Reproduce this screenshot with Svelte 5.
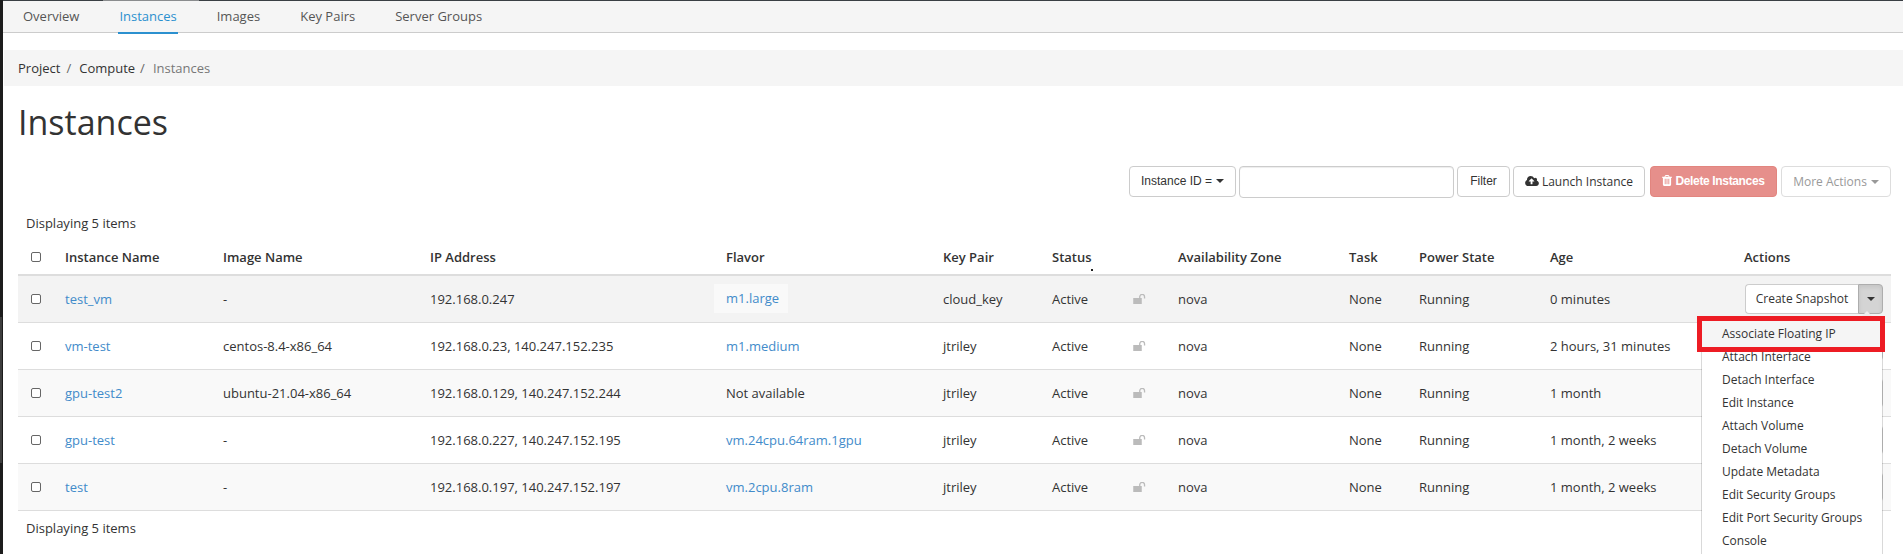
<script>
  const tabs = ['Overview', 'Instances', 'Images', 'Key Pairs', 'Server Groups'];
  const heads = ['Instance Name', 'Image Name', 'IP Address', 'Flavor', 'Key Pair', 'Status', '', 'Availability Zone', 'Task', 'Power State', 'Age', 'Actions'];
  const rows = [
    { name: 'test_vm', image: '-', ip: '192.168.0.247', flavor: 'm1.large', flavorLink: true, key: 'cloud_key', age: '0 minutes' },
    { name: 'vm-test', image: 'centos-8.4-x86_64', ip: '192.168.0.23, 140.247.152.235', flavor: 'm1.medium', flavorLink: true, key: 'jtriley', age: '2 hours, 31 minutes' },
    { name: 'gpu-test2', image: 'ubuntu-21.04-x86_64', ip: '192.168.0.129, 140.247.152.244', flavor: 'Not available', flavorLink: false, key: 'jtriley', age: '1 month' },
    { name: 'gpu-test', image: '-', ip: '192.168.0.227, 140.247.152.195', flavor: 'vm.24cpu.64ram.1gpu', flavorLink: true, key: 'jtriley', age: '1 month, 2 weeks' },
    { name: 'test', image: '-', ip: '192.168.0.197, 140.247.152.197', flavor: 'vm.2cpu.8ram', flavorLink: true, key: 'jtriley', age: '1 month, 2 weeks' }
  ];
  const menu = ['Associate Floating IP', 'Attach Interface', 'Detach Interface', 'Edit Instance', 'Attach Volume', 'Detach Volume', 'Update Metadata', 'Edit Security Groups', 'Edit Port Security Groups', 'Console'];
</script>

<div class="screen">
  <div class="edge"><div class="thumb"></div></div>
  <div class="main">
    <div class="topline"></div>
    <nav class="tabs">
      {#each tabs as t, i}
        <span class="tab" class:active={i === 1}>{t}</span>
      {/each}
    </nav>
    <div class="crumbs">
      <span class="firstcrumb">Project</span><span class="sep">/</span><span>Compute</span><span class="sep">/</span><span class="cur">Instances</span>
    </div>
    <div class="content">
      <h1>Instances</h1>
      <div class="toolbar">
        <button class="btn arial idsel">Instance ID =<i class="caret"></i></button>
        <div class="input"></div>
        <button class="btn arial filter">Filter</button>
        <button class="btn launch">
          <svg class="ico-cloud" viewBox="0 128 1920 1536"><path fill="#333" d="M1280 864q0-14-9-23l-352-352q-9-9-23-9t-23 9l-351 351q-10 12-10 24 0 14 9 23t23 9h224v352q0 13 9.500 22.500t22.500 9.500h192q13 0 22.500-9.500t9.500-22.500v-352h224q13 0 22.500-9.500t9.500-22.500zm640 288q0 159-112.500 271.500t-271.500 112.500h-1088q-185 0-316.500-131.500t-131.500-316.500q0-130 70-240t188-165q-2-30-2-43 0-212 150-362t362-150q156 0 285.500 87t188.500 231q71-62 166-62 106 0 181 75t75 181q0 76-41 138 130 31 213.500 135.500t83.500 238.500z"/></svg>
          Launch Instance
        </button>
        <button class="btn arial del">
          <svg class="ico-trash" viewBox="0 128 1408 1536"><path fill="#fff" d="M512 1376v-704q0-14-9-23t-23-9h-64q-14 0-23 9t-9 23v704q0 14 9 23t23 9h64q14 0 23-9t9-23zm256 0v-704q0-14-9-23t-23-9h-64q-14 0-23 9t-9 23v704q0 14 9 23t23 9h64q14 0 23-9t9-23zm256 0v-704q0-14-9-23t-23-9h-64q-14 0-23 9t-9 23v704q0 14 9 23t23 9h64q14 0 23-9t9-23zm-544-992h448l-48-117q-7-9-17-11h-317q-10 2-17 11zm928 32v64q0 14-9 23t-23 9h-96v948q0 83-47 143.500t-113 60.500h-832q-66 0-113-58.500t-47-141.500v-952h-96q-14 0-23-9t-9-23v-64q0-14 9-23t23-9h309l70-167q15-37 54-63t79-26h320q40 0 79 26t54 63l70 167h309q14 0 23 9t9 23z"/></svg>
          Delete Instances
        </button>
        <button class="btn more">More Actions<i class="caret grey"></i></button>
      </div>
      <div class="count">Displaying 5 items</div>
      <table>
        <colgroup>
          <col class="c0" /><col class="c1" /><col class="c2" /><col class="c3" /><col class="c4" /><col class="c5" /><col class="c6" /><col class="c7" /><col class="c8" /><col class="c9" /><col class="c10" /><col class="c11" /><col class="c12" />
        </colgroup>
        <thead>
          <tr>
            <th class="chk"><span class="box"></span></th>
            {#each heads as h, i}
              <th class:statushead={i === 5}>{h}{#if i === 5}<i class="dot"></i>{/if}</th>
            {/each}
          </tr>
        </thead>
        <tbody>
          {#each rows as r, i}
            <tr class:hover={i === 0} class:odd={i === 2 || i === 4}>
              <td class="chk"><span class="box"></span></td>
              <td><span class="link">{r.name}</span></td>
              <td>{r.image}</td>
              <td>{r.ip}</td>
              <td>
                {#if r.flavorLink}<span class="link" class:hl={i === 0}>{r.flavor}</span>{:else}{r.flavor}{/if}
              </td>
              <td>{r.key}</td>
              <td>Active</td>
              <td>
                <svg class="ico-lock" viewBox="0 0 12.500 10">
                  <rect x="0" y="4" width="8.500" height="6" fill="#bbb" />
                  <path d="M6.500 4.500V2.800a2.300 2.300 0 0 1 4.800 0V4.500" fill="none" stroke="#bbb" stroke-width="1.300" />
                </svg>
              </td>
              <td>nova</td>
              <td>None</td>
              <td>Running</td>
              <td>{r.age}</td>
              <td class="actions">
                <div class="split">
                  <div class="split-main">{i === 0 ? 'Create Snapshot' : ''}</div>
                  <div class="split-caret" class:open={i === 0}><i class="caret"></i></div>
                  {#if i === 0}
                    <div class="menu">
                      <div class="annot"></div>
                      {#each menu as m, j}
                        <div class="item" class:first={j === 0}>{m}</div>
                      {/each}
                    </div>
                  {/if}
                </div>
              </td>
            </tr>
          {/each}
        </tbody>
      </table>
      <div class="count foot">Displaying 5 items</div>
    </div>
  </div>
</div>

<style>
  :global(body) { margin: 0; background: #fff; }
  .screen { display: flex; height: 554px; overflow: hidden; background: #fff; font: 13px/18px "Open Sans", sans-serif; color: #333; }
  .edge { position: relative; width: 3px; flex: none; background: #1c1c1c; }
  .thumb { position: absolute; left: 0; top: 317px; width: 2px; height: 146px; background: #3d3d3d; }
  .main { flex: 1; min-width: 0; }
  .topline { height: 1px; background: linear-gradient(90deg, #3a3f44 100px, #8a8c8e 100px, #8a8c8e 196px, #3a3f44 196px); }
  .tabs { display: flex; gap: 40px; height: 31px; padding-left: 20px; background: #f5f5f5; border-bottom: 1px solid #ccc; }
  .tab { font-size: 13px; line-height: 31px; color: #555; height: 31px; }
  .tab.active { color: #2b90cf; position: relative; }
  .tab.active::after { content: ""; position: absolute; left: -1px; right: -1px; bottom: -2px; height: 2px; background: #2b90cf; }
  .crumbs { display: flex; align-items: center; margin: 17px 0 0 1px; height: 36px; padding-left: 14px; background: #f5f5f5; font-size: 13px; }
  .firstcrumb { margin-right: 1px; }
  .sep { margin: 0 8px 0 5px; color: #666; }
  .cur { color: #777; }
  .content { padding: 0 12px 0 15px; }
  h1 { margin: 17px 0 0; font-size: 34px; line-height: 38px; font-weight: 500; color: #333; }
  .toolbar { display: flex; justify-content: flex-end; align-items: flex-start; gap: 3px; margin-top: 25px; }
  .btn { box-sizing: border-box; height: 31px; padding: 0; background: #fff; border: 1px solid #ccc; border-radius: 4px; font: 12px "Open Sans", sans-serif; color: #333; display: flex; align-items: center; justify-content: center; }
  .arial { font-family: "Liberation Sans", Arial, sans-serif; padding-bottom: 2px; }
  .idsel { width: 107px; }
  .input { box-sizing: border-box; width: 215px; height: 32px; border: 1px solid #ccc; border-radius: 4px; box-shadow: inset 0 1px 1px rgba(0,0,0,.075); }
  .filter { width: 53px; }
  .launch { width: 132px; gap: 3px; }
  .del { width: 127px; margin-left: 2px; gap: 3px; background: #e68f8b; border-color: #e2857f; color: #fff; font-weight: 700; letter-spacing: -.35px; }
  .more { width: 110px; margin-left: 1px; color: #999; border-color: #ddd; }
  .ico-cloud { width: 14px; height: 11px; }
  .ico-trash { width: 10px; height: 11px; }
  .caret { display: inline-block; width: 0; height: 0; margin-left: 4px; border-top: 4px solid #333; border-left: 4px solid transparent; border-right: 4px solid transparent; }
  .caret.grey { border-top-color: #999; }
  .count { margin: 16px 0 0 8px; line-height: 18px; }
  table { width: 1873px; margin-top: 6px; table-layout: fixed; border-collapse: separate; border-spacing: 0; }
  .c0 { width: 39px; } .c1 { width: 158px; } .c2 { width: 207px; } .c3 { width: 296px; } .c4 { width: 217px; } .c5 { width: 109px; } .c6 { width: 81px; } .c7 { width: 45px; } .c8 { width: 171px; } .c9 { width: 70px; } .c10 { width: 131px; } .c11 { width: 194px; } .c12 { width: 155px; }
  th, td { box-sizing: border-box; padding: 0 8px; text-align: left; white-space: nowrap; }
  th { height: 38px; padding-top: 2px; border-bottom: 2px solid #ddd; font-weight: 600; color: #333; }
  td { height: 47px; border-bottom: 1px solid #ddd; }
  th.chk, td.chk { padding: 0 0 0 13px; }
  th.chk { padding-top: 2px; }
  .box { display: block; box-sizing: border-box; width: 10px; height: 10px; border: 1px solid #666; border-radius: 2px; background: #fff; }
  .statushead { position: relative; }
  .dot { position: absolute; left: 47px; top: 31px; width: 2px; height: 2px; background: #222; }
  tr.hover td { background: #f3f3f3; }
  tr.odd td { background: #f9f9f9; }
  .link { color: #428bca; }
  .hl { display: inline-block; position: relative; top: -1px; margin: -5px 0 -6px -12px; padding: 5px 9px 6px 12px; background: #f9f9f9; }
  .ico-lock { display: block; width: 13px; height: 10px; }
  td.actions { padding: 0; }
  .split { position: relative; display: flex; justify-content: flex-end; padding-right: 8px; font-size: 12px; }
  .split-main { box-sizing: border-box; width: 113px; height: 30px; line-height: 28px; text-align: center; background: #fff; border: 1px solid #ccc; border-right: 0; border-radius: 4px 0 0 4px; }
  .split-caret { box-sizing: border-box; width: 25px; height: 30px; display: flex; align-items: center; justify-content: center; background: #fff; border: 1px solid #ccc; border-radius: 0 4px 4px 0; }
  .split-caret.open { background: #d4d4d4; border-color: #adadad; box-shadow: inset 0 2px 4px rgba(0,0,0,.08); }
  .split-caret .caret { margin: 0; }
  .menu { position: absolute; z-index: 5; top: 32px; right: 8px; box-sizing: border-box; width: 182px; padding: 5px 0 40px; background: #fff; background-clip: padding-box; border: 1px solid rgba(0,0,0,.15); }
  .menu::before { content: ""; position: absolute; right: 10px; top: -6px; border-bottom: 5px solid #eee; border-left: 5px solid transparent; border-right: 5px solid transparent; }
  .item { padding-left: 20px; line-height: 23px; color: #333; white-space: nowrap; }
  .item.first { position: relative; z-index: 2; }
  .annot { position: absolute; z-index: 1; left: -5px; right: -3px; top: -1px; height: 36px; box-sizing: border-box; border: 5px solid #ed1c24; background: #f5f5f5; }
  .foot { margin-top: 8px; }
</style>
